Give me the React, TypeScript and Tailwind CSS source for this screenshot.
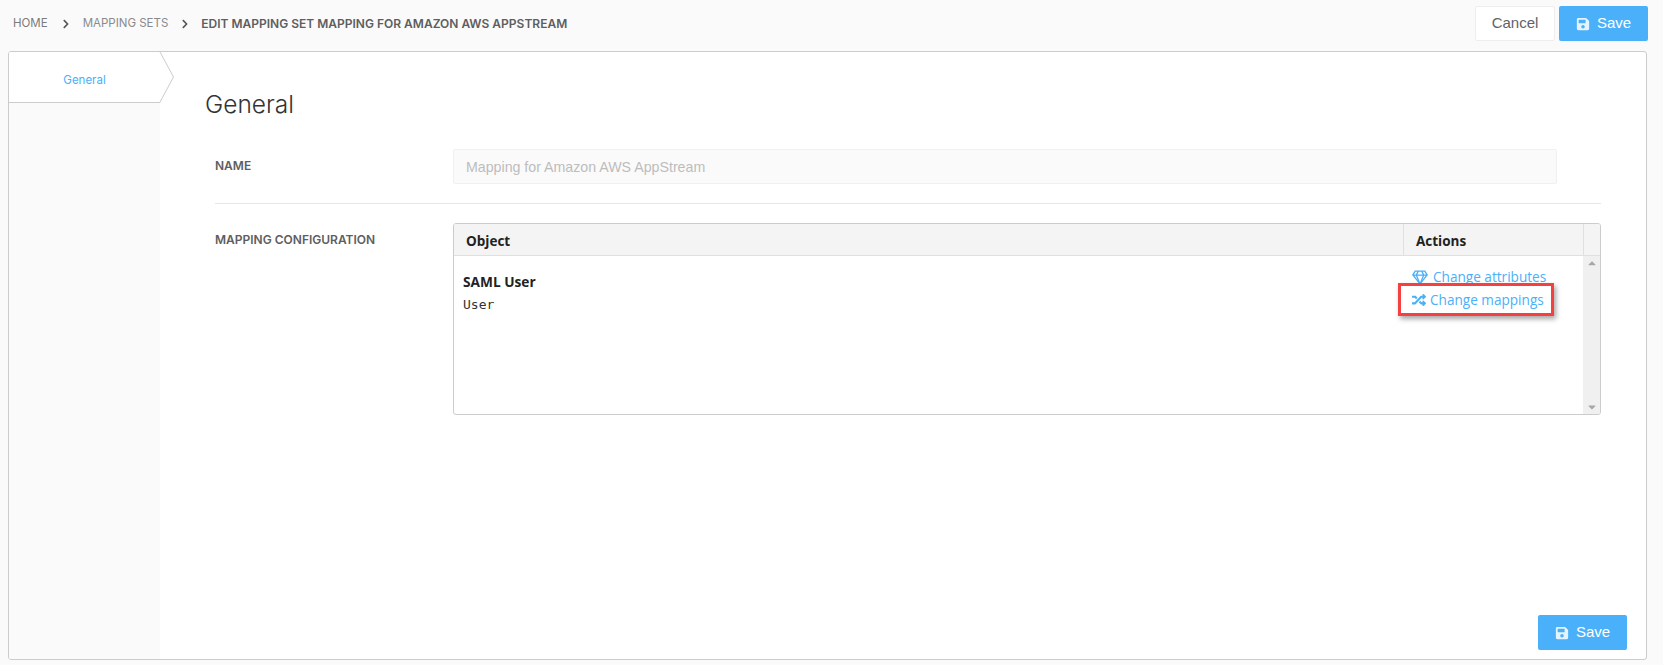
import React from "react";
import { FaSave, FaRegGem, FaRandom, FaChevronRight, FaCaretUp, FaCaretDown } from "react-icons/fa";

const mont = "font-['Inter','Noto_Sans',sans-serif]";

function SaveButton() {
  return (
    <button className="flex h-[35px] w-[89px] items-center justify-center gap-[7px] rounded-[2px] bg-[#4ab0f9] font-['Liberation_Sans',sans-serif] text-[15px] text-white">
      <FaSave className="h-[14px] w-[14px] text-[#e4f3fe]" />
      <span>Save</span>
    </button>
  );
}

export default function App() {
  return (
    <div className="flex h-[665px] w-[1663px] flex-col overflow-hidden bg-[#fafafa] pl-2 pr-[15px]">
      <header className="flex h-[51px] shrink-0 items-center justify-between pb-[4px] pl-[5px]">
        <nav className={`flex items-center text-[11.5px] ${mont}`}>
          <span className="text-[#7b7b7b]">HOME</span>
          <FaChevronRight className="ml-[13px] mr-[12px] h-[10px] w-[10px] text-[#555]" />
          <span className="text-[#8a8a8a]">MAPPING SETS</span>
          <FaChevronRight className="ml-[12px] mr-[11px] h-[10px] w-[10px] text-[#555]" />
          <span className="text-[12px] font-semibold text-[#5e5e5e]">EDIT MAPPING SET MAPPING FOR AMAZON AWS APPSTREAM</span>
        </nav>
        <div className="flex gap-1">
          <button className="flex h-[35px] w-[80px] items-center justify-center rounded-[2px] border border-[#eeeeee] bg-white font-['Liberation_Sans',sans-serif] text-[15px] text-[#5f6368]">
            Cancel
          </button>
          <SaveButton />
        </div>
      </header>

      <main className="flex h-[609px] w-[1639px] shrink-0 overflow-hidden rounded-[3px] border border-[#cccccc] bg-white">
        <aside className="w-[151px] shrink-0 bg-[#fafafa]">
          <div className="relative h-[51px] border-b border-[#cccccc] bg-white">
            <div className={`flex h-full items-center justify-center pt-[8px] text-[11.5px] text-[#4ab0f9] ${mont}`}>General</div>
            <svg className="absolute left-[150px] top-[-1px] z-10" width="16" height="52" viewBox="0 0 16 52">
              <path d="M0 0 L15 26 L0 52 Z" fill="#ffffff" />
              <path d="M0.5 0 L14.5 26 L0.5 52" fill="none" stroke="#cccccc" strokeWidth="1" />
            </svg>
          </div>
        </aside>

        <section className="flex min-w-0 flex-1 flex-col pl-[45px] pr-[45px]">
          <h1 className={`mt-[38px] h-[28px] text-[24.5px] font-light leading-[28px] text-[#333] ${mont}`}>General</h1>

          <div className="ml-[10px] mt-[31px] flex items-start border-b border-[#e6e6e6] pb-[19px]">
            <label className={`w-[238px] shrink-0 pt-[10px] text-[12px] font-semibold leading-[14px] text-[#5e5e5e] ${mont}`}>NAME</label>
            <input
              readOnly
              value="Mapping for Amazon AWS AppStream"
              className="mr-[44px] h-[35px] min-w-0 flex-1 rounded-[2px] border border-[#f0f0f0] bg-[#fafafa] px-[12px] font-['Liberation_Sans',sans-serif] text-[14.2px] text-[#bdbdbd] outline-none"
            />
          </div>

          <div className="ml-[10px] mt-[19px] flex items-start">
            <label className={`w-[238px] shrink-0 pt-[10px] text-[12px] font-semibold leading-[14px] text-[#5e5e5e] ${mont}`}>MAPPING CONFIGURATION</label>
            <div className="flex h-[192px] min-w-0 flex-1 flex-col overflow-hidden rounded-[3px] border border-[#cccccc] font-['Open_Sans',sans-serif]">
              <div className="flex h-[32px] shrink-0 border-b border-[#e0e0e0] bg-[#f4f4f4] text-[13.5px] font-bold text-[#222]">
                <div className="flex flex-1 items-center pl-[12px] pt-[3px]">Object</div>
                <div className="flex w-[180px] items-center border-l border-[#e0e0e0] pl-[12px] pt-[3px]">Actions</div>
                <div className="w-[17px] border-l border-[#e0e0e0]" />
              </div>
              <div className="flex min-h-0 flex-1">
                <div className="flex-1 pl-[9px] pt-[16px]">
                  <div className="text-[13.7px] font-bold leading-[19px] text-[#222]">SAML User</div>
                  <div className="mt-[6px] font-['DejaVu_Sans_Mono',monospace] text-[13px] leading-[15px] text-[#333]">User</div>
                </div>
                <div className="relative w-[180px] pl-[9px] pt-[10px] text-[13.6px] leading-[22.5px] text-[#4ab0f9]">
                  <a className="flex items-center gap-[5px]"><FaRegGem className="h-[15px] w-[16px]" />Change attributes</a>
                  <a className="flex items-center gap-[4px]"><FaRandom className="h-[14px] w-[14px]" />Change mappings</a>
                  <div className="absolute left-[-5px] top-[27px] h-[33px] w-[156px] border-[3px] border-[#f44040] shadow-[2px_3px_5px_rgba(0,0,0,0.35)]" />
                </div>
                <div className="flex w-[17px] flex-col items-center justify-between bg-[#f0f0f0] py-[1px] text-[#a8a8a8]">
                  <FaCaretUp className="h-[12px] w-[12px]" />
                  <FaCaretDown className="h-[12px] w-[12px]" />
                </div>
              </div>
            </div>
          </div>

          <div className="mb-[9px] mr-[-26px] mt-auto flex justify-end">
            <SaveButton />
          </div>
        </section>
      </main>
    </div>
  );
}
